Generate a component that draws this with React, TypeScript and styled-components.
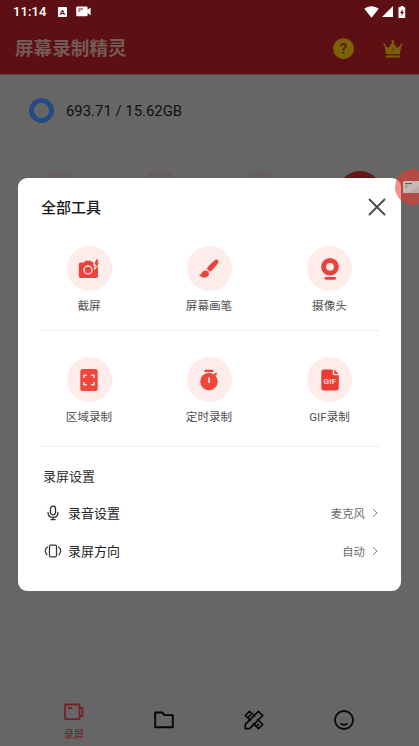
import React from 'react';
import styled, { createGlobalStyle } from 'styled-components';

const GlobalStyle = createGlobalStyle`
  *, *::before, *::after { box-sizing: border-box; }
  body {
    margin: 0;
    background: #666;
    font-family: Roboto, 'Noto Sans CJK SC', sans-serif;
    overflow: hidden;
  }
  svg { display: block; flex: none; }
`;

const Screen = styled.div`
  position: relative;
  width: 419px;
  height: 746px;
  display: flex;
  flex-direction: column;
  overflow: hidden;
  background: #666;
`;

const Header = styled.header`
  height: 75px;
  flex: none;
  background: #5c1013;
  border-bottom: 1px solid #69403f;
`;

const StatusBar = styled.div`
  height: 23px;
  display: flex;
  align-items: center;
  padding: 0 13px;
  color: #fff;
`;

const Clock = styled.span`
  width: 45px;
  font-size: 13px;
  font-weight: 500;
  letter-spacing: 0.1px;
  line-height: 23px;
`;

const StatusGroup = styled.div<{ $gap: number; $end?: boolean }>`
  display: flex;
  align-items: center;
  gap: ${(p) => p.$gap}px;
  margin-left: ${(p) => (p.$end ? 'auto' : '0')};
`;

const TitleRow = styled.div`
  height: 51px;
  display: flex;
  align-items: center;
  padding: 0 16px 0 15px;
`;

const Title = styled.h1`
  margin: 0 auto 0 0;
  padding-top: 1px;
  font-size: 18.6px;
  line-height: 28px;
  font-weight: 700;
  color: #745a56;
`;

const HeaderIcons = styled.div`
  display: flex;
  align-items: center;
  gap: 28px;
`;

const Main = styled.main`
  flex: 1;
  display: flex;
  flex-direction: column;
`;

const Storage = styled.div`
  display: flex;
  align-items: center;
  gap: 12px;
  height: 25px;
  margin: 23px 0 0 29px;
  font-size: 14.9px;
  color: #101010;
`;

const Ring = styled.div`
  width: 25px;
  height: 25px;
  border: 5px solid #264a83;
  border-radius: 50%;
`;

const Shortcuts = styled.div`
  display: flex;
  gap: 56px;
  margin: 48px 0 0 38px;
`;

const Shortcut = styled.div<{ $active?: boolean }>`
  width: 44px;
  height: 44px;
  border-radius: 50%;
  background: ${(p) => (p.$active ? '#5c1716' : '#665e5d')};
`;

const TabBar = styled.nav`
  height: 52px;
  flex: none;
  display: flex;
  justify-content: center;
  gap: 50px;
  padding-right: 1px;
  border-top: 1px solid #626262;
`;

const Tab = styled.div<{ $active?: boolean }>`
  width: 40px;
  display: flex;
  flex-direction: column;
  align-items: center;
  justify-content: center;
  gap: 6px;
  padding: ${(p) => (p.$active ? '3px 0 0' : '0 0 1px')};
  font-size: 10.2px;
  line-height: 15px;
  color: #75212a;
`;

const Backdrop = styled.div`
  position: absolute;
  inset: 0;
  padding: 178px 18px 0;
`;

const Dialog = styled.section`
  height: 413px;
  border-radius: 9px;
  background: #fff;
  padding: 0 15px 0 22px;
  display: flex;
  flex-direction: column;
`;

const DialogHeader = styled.div`
  height: 57px;
  display: flex;
  align-items: center;
  justify-content: space-between;
  padding-left: 1px;
`;

const DialogTitle = styled.h2`
  margin: 0;
  font-size: 15px;
  font-weight: 500;
  color: #1a1a1a;
`;

const ToolGrid = styled.div<{ $height: number; $top: number }>`
  display: grid;
  grid-template-columns: 120px 120px 121px;
  height: ${(p) => p.$height}px;
  padding-top: ${(p) => p.$top}px;
  margin-left: -11px;
`;

const Tool = styled.div`
  display: flex;
  flex-direction: column;
  align-items: center;
  gap: 6px;
  font-size: 11.6px;
  line-height: 18px;
  color: #505050;
`;

const ToolDisc = styled.div`
  width: 45px;
  height: 45px;
  border-radius: 50%;
  background: #feecea;
  display: flex;
  align-items: center;
  justify-content: center;
`;

const Divider = styled.div`
  height: 1px;
  width: 340px;
  flex: none;
  background: #eee;
`;

const SectionTitle = styled.h3`
  margin: 19px 0 5px 3px;
  font-size: 13px;
  line-height: 22px;
  font-weight: 400;
  color: #2e2e2e;
`;

const SettingRow = styled.div`
  display: grid;
  grid-template-columns: 25px 1fr auto 10px;
  align-items: center;
  height: 38px;
  margin: 0 6px 0 3px;
  font-size: 13px;
  color: #222;
`;

const SettingIcon = styled.span`
  width: 19px;
  display: flex;
  justify-content: center;
  padding-top: 1px;
`;

const SettingValue = styled.span`
  font-size: 11.4px;
  color: #6b6b6b;
  margin-right: 5px;
  padding-top: 2px;
`;

const ChevronBox = styled.span`
  padding-top: 2px;
`;

const FloatingButton = styled.div`
  position: absolute;
  left: 395px;
  top: 169px;
  width: 36px;
  height: 36px;
  border-radius: 50%;
  background: rgba(243, 50, 42, 0.54);
  display: flex;
  align-items: center;
  padding-left: 8px;
`;

const RED = '#e8443b';
const DISC = '#feecea';

const CameraFlash = () => (
  <svg width="22" height="22" viewBox="0 0 22 22">
    <path fill={RED} d="M3 4.500h3l.8-1.100c.3-.5.600-.7 1.100-.7h4.700c.5 0 .8.200 1.100.7l.8 1.100h3.500c1.300 0 2 .7 2 2v11.500c0 1.300-.7 2-2 2H2.800c-1.300 0-2-.7-2-2V6.500c0-1.300.9-2 2.200-2z" />
    <path d="M17.200 2.300h3.300l-1 2.800h1.700l-4.700 6.300.9-4.200h-1.700z" fill={RED} stroke={DISC} strokeWidth="1.200" />
    <circle cx="10" cy="12" r="4" fill="none" stroke="#fde5e2" strokeWidth="1.300" />
    <path d="M18.200 1.500h2.200l-1 3.200h1.700l-3.600 5 .7-3.600h-1.500z" fill={RED} />
  </svg>
);

const Brush = () => (
  <svg width="22" height="22" viewBox="0 0 22 22">
    <path fill={RED} d="M17 2c1.800-1.500 4.300.5 3.200 2.700-2.200 3.600-4.800 6.300-8 9-.6.500-1.200.4-1.700-.1l-1.700-1.800c-.5-.5-.4-1.100 0-1.600C11.600 7 14 4.500 17 2z" />
    <path fill={RED} d="M7.800 12.600c2.200.300 3.500 2.100 3.100 4-.9 3.800-7.400 4.300-10.100 0 1.800.2 2.400-.5 3-1.700.9-1.600 2.300-2.500 4-2.300z" />
    <path d="m8 10.300 4 4" stroke={DISC} strokeWidth="1" />
  </svg>
);

const Webcam = () => (
  <svg width="22" height="24" viewBox="0 0 22 24">
    <circle cx="11" cy="9.800" r="6.400" fill="none" stroke={RED} strokeWidth="5" />
    <path d="M7 21.200h8.500" stroke={RED} strokeWidth="3" strokeLinecap="round" />
    <path d="M5.500 19.300h11.500" stroke={DISC} strokeWidth="1" />
  </svg>
);

const Area = () => (
  <svg width="18" height="22" viewBox="0 0 18 22">
    <rect x="0.300" y="0" width="17.400" height="22" rx="2.600" fill="#f2453b" />
    <path d="M4 9V6.300h2.900M11.100 6.300H14V9M14 13v2.700h-2.900M6.900 15.700H4V13" fill="none" stroke="#fde5e2" strokeWidth="1.500" />
  </svg>
);

const Stopwatch = () => (
  <svg width="20" height="22" viewBox="0 0 20 22">
    <circle cx="10" cy="12.500" r="8.700" fill="#f2453b" />
    <path d="M6.500 1.900h7" stroke={RED} strokeWidth="2.200" strokeLinecap="round" />
    <path d="m15.500 6 1.600-1.500" stroke={RED} strokeWidth="1.800" strokeLinecap="round" />
    <path d="M10 9.200v4" stroke="#fde5e2" strokeWidth="1.700" strokeLinecap="round" />
  </svg>
);

const GifText = styled.text`
  font: 400 8px Roboto, sans-serif;
  fill: #fde5e2;
`;

const GifFile = () => (
  <svg width="18" height="22" viewBox="0 0 18 22">
    <path fill="#e93c34" d="M2.800.4h8.900v3.500c0 1.500.8 2.300 2.300 2.300h3.800v12.900c0 1.600-.9 2.500-2.500 2.500H2.800C1.200 21.600.3 20.700.3 19.100V2.900C.3 1.300 1.200.4 2.800.4z" />
    <path fill="#e93c34" d="M13.200.5 17.600 5h-3.100c-.9 0-1.300-.4-1.300-1.300z" />
    <GifText x="2.600" y="15.300" textLength="12.600" stroke="#fde5e2" strokeWidth="0.200">GIF</GifText>
  </svg>
);

const Mic = () => (
  <svg width="14" height="16" viewBox="0 0 14 16" fill="none" stroke="#333" strokeWidth="1.300" strokeLinecap="round">
    <rect x="4.500" y="1.200" width="5" height="8.600" rx="2.500" />
    <path d="M2 7.500c0 3 2 4.900 5 4.900s5-1.900 5-4.900M7 12.500v2M4.900 14.600h4.200" />
  </svg>
);

const Rotate = () => (
  <svg width="18" height="16" viewBox="0 0 18 16" fill="none" stroke="#333" strokeWidth="1.250" strokeLinecap="round">
    <rect x="5.500" y="2.200" width="7" height="11.600" rx="1.200" />
    <path d="M3.400 4C1.800 5 1.200 6.400 1.300 8c.1 1.600.6 2.700 1.700 3.700M14.600 4c1.600 1 2.200 2.400 2.100 4-.1 1.600-.6 2.700-1.700 3.700" />
  </svg>
);

const Chevron = () => (
  <svg width="10" height="10" viewBox="0 0 10 10" fill="none" stroke="#888" strokeWidth="1">
    <path d="M3 1.200 7 5 3 8.900" />
  </svg>
);

const Close = () => (
  <svg width="18" height="18" viewBox="0 0 18 18" fill="none" stroke="#4c4c4c" strokeWidth="1.900" strokeLinecap="round">
    <path d="M1.500 1.500 16.500 16.500M16.500 1.500 1.500 16.500" />
  </svg>
);

const CardGlyph = () => (
  <svg width="20" height="12" viewBox="0 0 20 12">
    <path d="M1.500 0H20v12H1.500C.5 12 0 11.500 0 10.500v-9C0 .5.500 0 1.500 0z" fill="#c6bab6" />
    <path d="M2 2.600h7" stroke="#665550" strokeWidth="1.100" />
    <path d="M2.500 5h2M2.500 7.200l1-1.200" stroke="#8b706b" strokeWidth="0.900" />
    <path d="M5 12 20 2v10z" fill="#b2a5a0" opacity="0.600" />
  </svg>
);

const tools = [
  { label: '截屏', icon: <CameraFlash /> },
  { label: '屏幕画笔', icon: <Brush /> },
  { label: '摄像头', icon: <Webcam /> },
  { label: '区域录制', icon: <Area /> },
  { label: '定时录制', icon: <Stopwatch /> },
  { label: 'GIF录制', icon: <GifFile /> },
];

const ToolRow = ({ items, height, top }: { items: typeof tools; height: number; top: number }) => (
  <ToolGrid $height={height} $top={top}>
    {items.map((t) => (
      <Tool key={t.label}>
        <ToolDisc>{t.icon}</ToolDisc>
        {t.label}
      </Tool>
    ))}
  </ToolGrid>
);

const settings = [
  { label: '录音设置', value: '麦克风', icon: <Mic /> },
  { label: '录屏方向', value: '自动', icon: <Rotate /> },
];

const BadgeLetter = styled.text`
  font: 700 8px Roboto, sans-serif;
  fill: #5c1013;
`;

const HelpMark = styled.text`
  font: 700 15px Roboto, sans-serif;
  fill: #5a2110;
`;

export default function App() {
  return (
    <Screen>
      <GlobalStyle />
      <Header>
        <StatusBar>
          <Clock>11:14</Clock>
          <StatusGroup $gap={9}>
            <svg width="9" height="10" viewBox="0 0 9 10">
              <rect width="9" height="10" rx="1" fill="#fff" />
              <BadgeLetter x="4.500" y="8" textAnchor="middle">A</BadgeLetter>
            </svg>
            <svg width="15" height="11" viewBox="0 0 15 11">
              <path fill="#fff" d="M1.500.5h8.800c.8 0 1.300.5 1.300 1.300v2l3-2.200v7.600l-3-2.200v2c0 .8-.5 1.300-1.300 1.300H1.500C.7 10.300.200 9.800.200 9V1.800C.200 1 .700.500 1.500.500z" />
              <path d="M2.200 3h5M2.200 5h2.200" stroke="#5c1013" strokeWidth="0.900" />
            </svg>
          </StatusGroup>
          <StatusGroup $gap={2.500} $end>
            <svg width="15" height="12" viewBox="0 0 15 12">
              <path fill="#fff" d="M.3 2.800C4.500-.7 10.500-.7 14.700 2.800L7.500 11.800z" />
            </svg>
            <svg width="11" height="11" viewBox="0 0 11 11">
              <path fill="#fff" d="M11 0V11H0z" />
            </svg>
            <svg width="11" height="12" viewBox="0 0 11 12">
              <path fill="#fff" d="M4.500 1.200h1.200V0h2.800v1.200h1.700V12h-6.700V1.200z" />
              <path fill="#5c1013" d="M7.700 3 5 7h1.500v3L9 6H7.500z" />
            </svg>
          </StatusGroup>
        </StatusBar>
        <TitleRow>
          <Title>屏幕录制精灵</Title>
          <HeaderIcons>
            <svg width="22" height="22" viewBox="0 0 22 22">
              <circle cx="10.500" cy="10.700" r="10.500" fill="#7b6208" />
              <HelpMark x="10.500" y="16" textAnchor="middle">?</HelpMark>
            </svg>
            <svg width="20" height="20" viewBox="0 0 20 20" fill="#7b5c0b">
              <path d="M1.300 5.800 5.500 9 9.700 2.600 14 9l4.600-3.200-1.900 9.400H3.100z" />
              <path d="M3 16.500h13.900v2H3z" />
              <circle cx="1.500" cy="5.600" r="1.200" />
              <circle cx="9.800" cy="2.400" r="1.400" />
              <circle cx="18.400" cy="5.600" r="1.200" />
              <circle cx="9.900" cy="10.500" r="1.100" fill="#68340f" />
            </svg>
          </HeaderIcons>
        </TitleRow>
      </Header>

      <Main>
        <Storage>
          <Ring />
          693.71 / 15.62GB
        </Storage>
        <Shortcuts>
          <Shortcut />
          <Shortcut />
          <Shortcut />
          <Shortcut $active />
        </Shortcuts>
      </Main>

      <TabBar>
        <Tab $active>
          <svg width="20" height="18" viewBox="0 0 20 18" fill="none" stroke="#75212a" strokeWidth="1.800">
            <rect x="1" y="1.500" width="14.500" height="14.700" rx="0.500" />
            <path d="M15.500 5.200h3v8h-3M4 5h3.700" />
          </svg>
          录屏
        </Tab>
        <Tab>
          <svg width="20" height="18" viewBox="0 0 20 18" fill="none" stroke="#040404" strokeWidth="1.900" strokeLinejoin="round">
            <path d="M1.200 1.500h7l2.300 2.600h8.300v12.200H1.200z" />
          </svg>
        </Tab>
        <Tab>
          <svg width="20" height="20" viewBox="0 0 20 20" fill="none" stroke="#080808" strokeWidth="1.700" strokeLinejoin="round" strokeLinecap="round">
            <path d="M1.300 18.700v-4.300L14.500 1.300l4.200 4.200L5.600 18.700z" />
            <path d="M6.300 10.400 1.300 5.500l4.200-4.200 5 4.900M13.700 9.500l5 5-4.200 4.200-5-5M4.500 7l1.800-1.800M12.600 16.200l1.800-1.800" />
          </svg>
        </Tab>
        <Tab>
          <svg width="20" height="20" viewBox="0 0 20 20" fill="none" stroke="#080808" strokeWidth="1.800" strokeLinecap="round">
            <circle cx="10" cy="10" r="9" />
            <path d="M7.200 13.800c1.500 1.300 4.100 1.300 5.600 0" />
          </svg>
        </Tab>
      </TabBar>

      <Backdrop>
        <Dialog>
          <DialogHeader>
            <DialogTitle>全部工具</DialogTitle>
            <Close />
          </DialogHeader>
          <ToolRow items={tools.slice(0, 3)} height={95} top={11} />
          <Divider />
          <ToolRow items={tools.slice(3)} height={115} top={26} />
          <Divider />
          <SectionTitle>录屏设置</SectionTitle>
          {settings.map((s) => (
            <SettingRow key={s.label}>
              <SettingIcon>{s.icon}</SettingIcon>
              <span>{s.label}</span>
              <SettingValue>{s.value}</SettingValue>
              <ChevronBox>
                <Chevron />
              </ChevronBox>
            </SettingRow>
          ))}
        </Dialog>
      </Backdrop>
      <FloatingButton>
        <CardGlyph />
      </FloatingButton>
    </Screen>
  );
}
